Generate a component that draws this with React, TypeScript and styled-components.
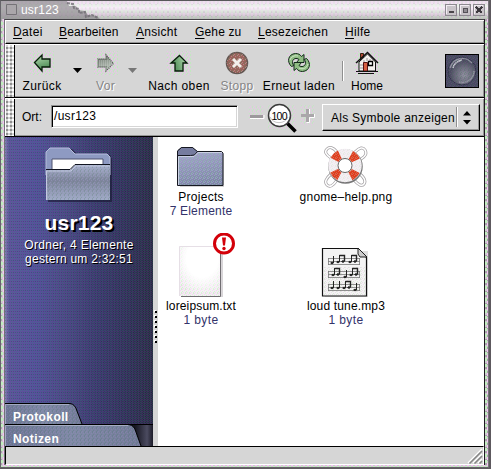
import React from "react";
import styled, { createGlobalStyle } from "styled-components";

const GlobalStyle = createGlobalStyle`
  html, body { margin: 0; padding: 0; background: #fff; }
  body { font-family: "Liberation Sans", Arial, sans-serif; font-size: 12px; line-height: 14px; color: #000; overflow: hidden; }
  svg { display: block; flex: none; }
`;

const Screen = styled.div`
  width: 492px;
  height: 469px;
  overflow: hidden;
`;
const Desktop = styled.div`
  width: 491px;
  height: 469px;
  background: #5d595e;
`;
const Frame = styled.div`
  box-sizing: border-box;
  width: 489px;
  height: 468px;
  border-left: 1px solid #66646a;
  border-top: 1px solid #58575a;
  border-right: 1px solid #77757a;
  border-bottom: 1px solid #646267;
  background:
    conic-gradient(#f4c4f3 25%, transparent 0) 0 0 / 4px 6px,
    conic-gradient(#c0edbd 25%, transparent 0) 2px 3px / 4px 6px,
    conic-gradient(#aaa5ab 25%, transparent 0) 1px 2px / 6px 4px,
    #cfcbd0;
  display: flex;
  flex-direction: column;
`;
const TitleBar = styled.header`
  height: 18px;
  flex: none;
  display: flex;
  align-items: center;
  padding-right: 3px;
  background: linear-gradient(#ede6eeaa, #fbf6fbcc 35%, #dcd7dcb0 70%, #b5b1b5b0);
`;
const TitleTab = styled.div`
  width: 94px;
  height: 18px;
  position: relative;
`;
const Title = styled.div`
  position: absolute;
  left: 20px;
  top: 2px;
  color: #fff;
  font-size: 12px;
  letter-spacing: 0.2px;
`;
const WindowButtons = styled.div`
  margin-left: auto;
  display: flex;
  gap: 2px;
`;
const Client = styled.div`
  margin-left: 3px;
  width: 481px;
  height: 446px;
  border-left: 1px solid #737177;
  border-top: 1px solid #454347;
  border-right: 1px solid #1c1a1e;
  box-sizing: border-box;
  background: #d6d6d6;
  display: flex;
  flex-direction: column;
`;
const barEdge = `
  box-sizing: border-box;
  border-top: 1px solid #fff;
  border-bottom: 1px solid #000;
  box-shadow: inset 0 -1px #969696, inset -1px 0 #969696;
  flex: none;
  display: flex;
`;
const MenuBar = styled.nav`
  ${barEdge}
  height: 24px;
  border-left: 1px solid #fff;
  padding: 4px 0 0 7px;
`;
const MenuItem = styled.div<{ $w: number; $ls: number }>`
  width: ${(p) => p.$w}px;
  letter-spacing: ${(p) => p.$ls}px;
  white-space: nowrap;
  u { text-underline-offset: 2px; text-decoration-thickness: 1px; }
`;
const Bar = styled.div<{ $h: number }>`
  ${barEdge}
  height: ${(p) => p.$h}px;
`;
const Handle = styled.div`
  box-sizing: border-box;
  width: 10px;
  flex: none;
  border-right: 1px solid #000;
  border-left: 1px solid #fff;
  background:
    conic-gradient(#fff 25%, transparent 0 50%, #8f8f8f 0 75%, transparent 0) 0 0 / 4px 4px,
    conic-gradient(#b0b0b0 25%, transparent 0 50%, #fff 0 75%, transparent 0) 2px 2px / 4px 4px,
    #d6d6d6;
`;
const ToolButton = styled.div<{ $w: number; $ls: number; $off?: boolean }>`
  width: ${(p) => p.$w}px;
  flex: none;
  display: flex;
  flex-direction: column;
  align-items: center;
  gap: 4px;
  padding-top: 6px;
  letter-spacing: ${(p) => p.$ls}px;
  white-space: nowrap;
  color: ${(p) => (p.$off ? "#858585" : "#000")};
  text-shadow: ${(p) => (p.$off ? "1px 1px #fff" : "none")};
`;
const Drop = styled.div<{ $w: number }>`
  width: ${(p) => p.$w}px;
  flex: none;
  display: flex;
  justify-content: center;
  padding-top: 23px;
`;
const Separator = styled.div<{ $h: number }>`
  width: 0;
  height: ${(p) => p.$h}px;
  border-left: 1px solid #8f8f8f;
  border-right: 1px solid #fff;
  flex: none;
`;
const SepCell = styled.div`
  width: 3px;
  padding-top: 16px;
`;
const Throbber = styled.div`
  margin: 9px 5px 0 auto;
`;
const Location = styled.div`
  display: flex;
  align-items: flex-start;
  flex: 1;
  padding: 5px 5px 0 7px;
`;
const OrtLabel = styled.label`
  width: 29px;
  padding-top: 6px;
`;
const Entry = styled.div`
  box-sizing: border-box;
  width: 187px;
  height: 23px;
  margin-top: 1px;
  background: #fff;
  border: 1px solid;
  border-color: #8f8f8f #fff #fff #8f8f8f;
  box-shadow: inset 1px 1px #000, inset -1px -1px #d6d6d6;
  padding: 3px 0 0 2px;
  letter-spacing: 0.3px;
`;
const ZoomBox = styled.div`
  margin: -1px 7px 0 11px;
  width: 66px;
`;
const Picker = styled.div`
  box-sizing: border-box;
  width: 158px;
  height: 27px;
  border: 1px solid;
  border-color: #fff #000 #000 #fff;
  box-shadow: inset -1px -1px #969696;
  display: flex;
  align-items: flex-start;
  padding: 2px 5px 0 8px;
`;
const PickerText = styled.div`
  width: 127px;
  padding-top: 4px;
  letter-spacing: 0.26px;
  white-space: nowrap;
`;
const Body = styled.div`
  display: flex;
  height: 309px;
  flex: none;
`;
const Sidebar = styled.aside`
  width: 148px;
  flex: none;
  display: flex;
  flex-direction: column;
  background:
    conic-gradient(#7a3aa838 25%, transparent 0 50%, #2f8a8030 0 75%, transparent 0) 0 0 / 3px 2px,
    conic-gradient(#0a102030 25%, transparent 0) 1px 0 / 2px 3px,
    linear-gradient(90deg, #8a83b4 0, #5c579a 4px, #54539a 30px, #4b4a84 60px, #3c3c6e 88px, #32335a 116px, #2a2b42 148px);
  color: #fff;
  text-shadow: 1px 1px #000;
`;
const SideInfo = styled.div`
  display: flex;
  flex-direction: column;
  align-items: center;
  padding: 10px 0 0 0;
  height: 266px;
  box-sizing: border-box;
`;
const SideTitle = styled.h1`
  margin: 8px 0 3px;
  font-size: 21px;
  line-height: 24px;
  letter-spacing: 0.2px;
  text-shadow: 2px 2px #000;
`;
const SideLine = styled.div<{ $ls: number }>`
  letter-spacing: ${(p) => p.$ls}px;
  white-space: nowrap;
`;
const SideTab = styled.div<{ $h: number }>`
  height: ${(p) => p.$h}px;
  display: grid;
  align-items: center;
  font-weight: bold;
  text-shadow: none;
  flex: none;
  > * { grid-area: 1 / 1; }
`;
const TabText = styled.span<{ $ls: number }>`
  padding: 7px 0 0 8px;
  letter-spacing: ${(p) => p.$ls}px;
`;
const Splitter = styled.div`
  width: 5px;
  flex: none;
  padding: 173px 0 0 1px;
  box-sizing: border-box;
`;
const Files = styled.main`
  flex: 1;
  background: #fff;
  display: grid;
  grid-template-columns: 145px 145px;
  grid-template-rows: 95px 120px;
`;
const FileItem = styled.div`
  display: flex;
  flex-direction: column;
  align-items: center;
  white-space: nowrap;
  width: 86px;
`;
const IconWell = styled.div<{ $h: number }>`
  height: ${(p) => p.$h}px;
  margin-bottom: 1px;
  display: flex;
  align-items: flex-end;
`;
const FileText = styled.div<{ $ls: number; $dim?: boolean }>`
  letter-spacing: ${(p) => p.$ls}px;
  color: ${(p) => (p.$dim ? "#33336a" : "#000")};
`;
const StatusBar = styled.footer`
  flex: 1;
  border: 1px solid;
  border-color: #000 #fff #fff #000;
  box-sizing: border-box;
  display: flex;
  justify-content: flex-end;
  align-items: flex-end;
`;

const WinBtn = ({ kind }: { kind: string }) => (
  <svg width="12" height="12" shapeRendering="crispEdges">
    <rect x="0.5" y="0.5" width="11" height="11" fill="#c9c4c9" stroke="#8d8990" />
    <path d="M1.5 10V1.5H10" stroke="#f3edf3" fill="none" />
    {kind === "min" && <path d="M4 8h5" stroke="#4a474b" strokeWidth="2" />}
    {kind === "max" && <path d="M4 4h4v4h-4z" fill="#918d93" stroke="#555158" />}
    {kind === "close" && <path d="M3 3l6 6M9 3l-6 6" stroke="#3c383e" strokeWidth="2" />}
  </svg>
);

const Dither = ({ id, a, b }: { id: string; a: string; b: string }) => (
  <pattern id={id} width="4" height="4" patternUnits="userSpaceOnUse">
    <path d="M0 0h1v1h-1zM2 1h1v1h-1zM1 3h1v1h-1z" fill={a} />
    <path d="M3 0h1v1h-1zM0 2h1v1h-1zM3 3h1v1h-1z" fill={b} />
  </pattern>
);

const Arrow = ({ rot, off }: { rot: number; off?: boolean }) => (
  <svg width="24" height="24">
    <defs>
      <Dither id={"ar" + rot} a="#eebfec" b="#bcebb9" />
      <linearGradient id={"ag" + rot} x2="0.3" y2="1">
        <stop stopColor={off ? "#c8d3c8" : "#b9dfb5"} />
        <stop offset="1" stopColor={off ? "#7b857b" : "#4a8a52"} />
      </linearGradient>
    </defs>
    <rect width="24" height="24" fill={`url(#ar${rot})`} opacity=".8" />
    <g transform={`rotate(${rot} 12 12)`}>
      <path d="M4.5 11.5 12 4v4h8v8h-8v4z" fill={`url(#ag${rot})`} stroke={off ? "#555" : "#071b09"} strokeWidth="1.3" strokeDasharray={off ? "1 1" : undefined} />
    </g>
    {off && <path d="M5 10h15M5 12h15M5 14h15" stroke="#d6d6d6" strokeDasharray="1 1" opacity=".6" />}
  </svg>
);

const StopIcon = () => (
  <svg width="24" height="24">
    <defs><Dither id="st" a="#b8a9a0" b="#6f7a5c" /></defs>
    <circle cx="12" cy="12" r="10.6" fill="#a0605c" stroke="#625652" strokeWidth="1.3" />
    <circle cx="12" cy="12" r="10.6" fill="url(#st)" opacity=".6" />
    <path d="M8 8l8 8M16 8l-8 8" stroke="#f2edea" strokeWidth="3" />
  </svg>
);

const ReloadIcon = () => (
  <svg width="24" height="24">
    <defs><Dither id="re" a="#eebfec" b="#bcebb9" /></defs>
    <rect width="24" height="24" fill="url(#re)" opacity=".7" />
    <g fill="#8fbd83" stroke="#13291a" strokeLinejoin="round">
      <path d="M4.500 15.500C-.5 11 1 3 8.500 2.500c3 0 4.500 1 6 3L17 3.500v8H9.500l2.500-3C9.500 6.500 6 7.500 5.500 10.500c-.3 2 .5 3 1.500 4z" />
      <path d="M19.500 7.500c5 4.500 3.500 12.500-4 13-3 0-4.500-1-6-3L7 19.500v-8h7.500l-2.500 3c2.500 2 6 1 6.500-2 .3-2-.5-3-1.500-4z" />
    </g>
    <path d="M3 9c1-3 4-5 8-4M21 13c-1 4-5 6-9 4" stroke="#d0e7c9" fill="none" />
  </svg>
);

const HomeIcon = () => (
  <svg width="24" height="24">
    <defs><Dither id="ho" a="#eebfec" b="#bcebb9" /></defs>
    <rect width="24" height="24" fill="url(#ho)" opacity=".8" />
    <path d="M5.5 9V2.5h3V7" fill="#b34b37" stroke="#321" />
    <path d="M4 11 12.5 3l8 8v9H4z" fill="#f4f1ee" stroke="#111" />
    <path d="M1 12 12.5 1.5 23 12" fill="none" stroke="#111" strokeWidth="1.5" />
    <path d="M5 14h4M12 7v3M9 9v3M15 8v2M5 17h3" stroke="#999" />
    <path d="M8.5 20v-8.500h4V20z" fill="#d55f42" stroke="#511" />
    <path d="M13.500 10.500h4v4h-4z" fill="#fff" stroke="#000" strokeWidth="1.3" />
    <path d="M1 20.500h22M3 22.500h16" stroke="#111" />
  </svg>
);

const ThrobberIcon = () => (
  <svg width="34" height="34">
    <defs>
      <radialGradient id="orb" cx=".58" cy=".65">
        <stop stopColor="#8f929f" /><stop offset=".65" stopColor="#666878" /><stop offset="1" stopColor="#4b4c60" />
      </radialGradient>
      <Dither id="td" a="#755b86" b="#4d6a61" />
    </defs>
    <rect x=".5" y=".5" width="33" height="33" fill="#484962" stroke="#000" />
    <circle cx="17" cy="17" r="14" fill="url(#orb)" />
    <path d="M5 14C8 4 20 1 27 9M29 17c0 8-7 13-15 11" stroke="#8f929f" strokeWidth="1.5" fill="none" />
    <path d="M8 14c1-5 5-7 9-8" stroke="#c4c6ce" strokeWidth="1.5" fill="none" />
    <circle cx="17" cy="17" r="14" fill="none" stroke="#32334c" />
    <rect x="1" y="1" width="32" height="32" fill="url(#td)" opacity=".35" />
  </svg>
);

const ZoomIcon = () => (
  <svg width="66" height="30">
    <defs><Dither id="zo" a="#eebfec" b="#bcebb9" /></defs>
    <path d="M0 3h14v14H0zM19 2h28v25H19zM52 2h13v20H52z" fill="url(#zo)" opacity=".6" />
    <path d="M1 12h13v3H1z" fill="#9d999d" /><path d="M1 15.500h14V12" fill="none" stroke="#fff" />
    <path d="M57 6h3v5h5v3h-5v5h-3v-5h-5v-3h5z" fill="#aaa7aa" />
    <path d="M60.500 6v5M65.500 11v3.500h-5v5h-3" fill="none" stroke="#fff" />
    <path d="m38 20 8.500 8.500" stroke="#000" strokeWidth="3.500" />
    <circle cx="30.500" cy="12.500" r="11" fill="#fff" stroke="#3b3b3b" strokeWidth="1.500" />
    <path d="M21 14a10 10 0 0 0 18 0" fill="none" stroke="#c5c5c5" />
    <text x="30.500" y="16.500" fontSize="10.500" textAnchor="middle" textLength="16">100</text>
  </svg>
);

const BigFolder = () => (
  <svg width="68" height="56">
    <defs>
      <linearGradient id="bf" x2="0" y2="1"><stop stopColor="#a8b1cc" /><stop offset=".45" stopColor="#7e849c" /><stop offset="1" stopColor="#a0abc6" /></linearGradient>
      <Dither id="bd" a="#a3a6d1" b="#668481" />
    </defs>
    <path d="M3 55V6l4-4h20l6 6h32l2 4v43z" fill="#17162e" opacity=".6" />
    <path d="M1 24V5l4-4h19l6 6h32l3 3v18H1z" fill="#8e9ac2" stroke="#b4bddb" />
    <path d="M7 26V12h51v10" fill="#fff" stroke="#4f536e" />
    <path d="M1 53V23h24l5-5h35v35z" fill="url(#bf)" />
    <path d="M1 53V23h24l5-5h35v35z" fill="url(#bd)" opacity=".35" />
    <path d="M1 22.500h24l5-5h35" fill="none" stroke="#111420" />
    <path d="M1.500 53V24H26l5-5h34" fill="none" stroke="#c1c8e0" />
  </svg>
);

const FolderIcon = () => (
  <svg width="50" height="43">
    <defs>
      <linearGradient id="pf" x2=".2" y2="1"><stop stopColor="#a8abcd" /><stop offset="1" stopColor="#7f89a6" /></linearGradient>
      <Dither id="pd" a="#a9a0db" b="#91bab5" />
    </defs>
    <path d="M4 8h44v33H4z" fill="#aaa" opacity=".5" />
    <path d="M1.500 39.500V5l4-3.500h11l4 4h25l1.500 1.500v32.500z" fill="url(#pf)" stroke="#161821" />
    <path d="M2 39V6h44v33z" fill="url(#pd)" opacity=".6" />
    <path d="M1.500 9.500V5l4-3.500h11l5 4-3 3.500-4 .5z" fill="#767c9f" stroke="#161821" />
    <path d="M2.500 39V10.500H18l4-4h24" stroke="#cbd0e4" fill="none" />
  </svg>
);

const TextIcon = () => (
  <svg width="70" height="65">
    <defs>
      <Dither id="tx" a="#f6d3f3" b="#d2f0cf" />
      <radialGradient id="tf" cx=".55" cy=".25" r=".75"><stop offset=".5" stopColor="#fff" /><stop offset="1" stopColor="#fff" stopOpacity="0" /></radialGradient>
    </defs>
    <path d="M15 16h42v48H15z" fill="#d8d5d8" />
    <path d="M13 13h42v50H13z" fill="#f1eff1" />
    <path d="M13 13h42v50H13z" fill="url(#tx)" />
    <path d="M13 13h42v50H13z" fill="url(#tf)" />
    <path d="M13.500 63V13.500h41" fill="none" stroke="#e6dfe6" />
    <path d="M54.500 16v47.500H15" fill="none" stroke="#716e72" />
    <circle cx="58" cy="10.500" r="9.500" fill="#fff" stroke="#d30009" strokeWidth="3" />
    <path d="M56 4.500h4l-1 8h-2z" fill="#d30009" /><circle cx="58" cy="15.500" r="1.700" fill="#d30009" />
  </svg>
);

const HelpIcon = () => (
  <svg width="44" height="43">
    <defs><Dither id="hd" a="#e7c5e4" b="#bdd7bb" /></defs>
    <g fill="none" stroke="#a5a2a5" strokeWidth="3">
      <path d="M13 6Q7-1 3 3t4 9M31 6q7-7 10-2t-4 9M7 28q-8 7-4 11t10-5M36 28q7 6 4 10t-10-4" />
    </g>
    <g fill="none" stroke="#fff" strokeWidth="1.500">
      <path d="M13 6Q7-1 3 3t4 9M31 6q7-7 10-2t-4 9M7 28q-8 7-4 11t10-5M36 28q7 6 4 10t-10-4" />
    </g>
    <circle cx="21.500" cy="20.500" r="12" fill="none" stroke="#777" strokeWidth="10.500" />
    <circle cx="21" cy="19.500" r="12" fill="#fff" stroke="#f3f0f3" strokeWidth="9.500" />
    <circle cx="21" cy="19.500" r="12" fill="none" stroke="#df3e1d" strokeWidth="9" strokeDasharray="7.500 11.350" strokeDashoffset="-5.670" />
    <circle cx="21" cy="19.500" r="12" fill="none" stroke="url(#hd)" strokeWidth="9" opacity=".25" />
    <circle cx="21" cy="19.500" r="7" fill="none" stroke="#666" />
  </svg>
);

const Note = ({ x, y, pair }: { x: number; y: number; pair?: boolean }) => (
  <g transform={`translate(${x} ${y})`} stroke="#222" fill="#222">
    <ellipse cx="1" cy="7" rx="1.300" ry=".7" />
    <path d="M2.500 7V0" fill="none" />
    {pair && <><path d="M2.500 .5h5V6" fill="none" strokeWidth="1.400" /><ellipse cx="6" cy="6.500" rx="1.300" ry=".7" /></>}
  </g>
);

const MusicIcon = () => (
  <svg width="50" height="51">
    <defs><Dither id="mu" a="#e8d8e6" b="#d5e2d2" /></defs>
    <path d="M4 4h43v46H4z" fill="#ccc" opacity=".6" />
    <path d="M1.500 1.500H37l8.500 9v38.500h-44z" fill="#f4f4f4" stroke="#111" strokeWidth="1.200" />
    <path d="M2 20h43v28H2z" fill="url(#mu)" opacity=".7" />
    <path d="M37 1v6l2 3h7z" fill="#ccc" stroke="#222" />
    {[11, 24, 37].map((y) => (
      <path key={y} d={`M7 ${y + 0.5}h32M7 ${y + 3.5}h32M7 ${y + 6.5}h32M7.500 ${y}v7M38.500 ${y}v7`} stroke="#777" strokeWidth=".8" />
    ))}
    <Note x={10} y={9} /><Note x={16} y={8} pair /><Note x={28} y={8} pair />
    <Note x={11} y={21} pair /><Note x={23} y={23} /><Note x={29} y={21} pair />
    <Note x={10} y={34} /><Note x={16} y={34} /><Note x={22} y={34} pair /><Note x={33} y={36} />
  </svg>
);

const TabShape = ({ end, h, dark }: { end: number; h: number; dark?: boolean }) => (
  <svg width="148" height={h}>
    <defs>
      <linearGradient id={"tb" + end}><stop stopColor="#6d7594" /><stop offset=".5" stopColor="#808aa6" /><stop offset="1" stopColor="#737b98" /></linearGradient>
      <linearGradient id={"dk" + end}><stop offset=".88" stopColor="#171722" /><stop offset=".96" stopColor="#4b4b60" /><stop offset="1" stopColor="#1d1c29" /></linearGradient>
      <Dither id={"t" + end} a="#9588c0" b="#537a78" />
    </defs>
    {dark && <rect width="148" height={h} fill={`url(#dk${end})`} />}
    <path d={`M0 ${h}V1H${end - 12}Q${end - 7} 1 ${end - 5} 8L${end} ${h}z`} fill={`url(#tb${end})`} />
    <path d={`M0 ${h}V1H${end - 12}Q${end - 7} 1 ${end - 5} 8L${end} ${h}z`} fill={`url(#t${end})`} opacity=".35" />
    <path d={`M.5 ${h}V1.500H${end - 13}`} fill="none" stroke="#b7bed2" opacity=".7" />
    <path d={`M0 .5H${end - 12}Q${end - 7} 1 ${end - 5} 8L${end} ${h}`} fill="none" stroke="#000" />
    {dark && <path d="M0 .5h148" stroke="#000" />}
  </svg>
);

const Tri = ({ fill }: { fill: string }) => (
  <svg width="11" height="6"><path d="M1 0h9L5.500 5z" fill={fill} /></svg>
);

export default function App() {
  return (
    <Screen>
      <GlobalStyle />
      <Desktop>
        <Frame>
          <TitleBar>
            <TitleTab>
              <svg width="104" height="18">
                <path d="M0 0h66l2 5h7l2 4 7 1 3 4 9 1 3 3H0z" fill="#8e8b8f" opacity=".68" />
                <path d="M66 2l6 1 1 4 5 1v4l6-1 1 5 6-2 6 3" fill="none" stroke="#716d73" strokeWidth="2" strokeDasharray="3 1" opacity=".8" />
                <path d="M5.500 3.500h10v10h-10z" fill="#aaa6aa" stroke="#757277" />
              </svg>
              <Title>usr123</Title>
            </TitleTab>
            <WindowButtons>
              <WinBtn kind="min" /><WinBtn kind="max" /><WinBtn kind="close" />
            </WindowButtons>
          </TitleBar>
          <Client>
            <MenuBar>
              <MenuItem $w={46} $ls={0.35}><u>D</u>atei</MenuItem>
              <MenuItem $w={77} $ls={0.15}><u>B</u>earbeiten</MenuItem>
              <MenuItem $w={59} $ls={0.3}><u>A</u>nsicht</MenuItem>
              <MenuItem $w={63} $ls={0.15}><u>G</u>ehe zu</MenuItem>
              <MenuItem $w={87} $ls={0.25}><u>L</u>esezeichen</MenuItem>
              <MenuItem $w={40} $ls={0.3}><u>H</u>ilfe</MenuItem>
            </MenuBar>
            <Bar $h={54}>
              <Handle />
              <ToolButton $w={54} $ls={0.4}><Arrow rot={0} />Zurück</ToolButton>
              <Drop $w={17}><Tri fill="#000" /></Drop>
              <ToolButton $w={39} $ls={0.4} $off><Arrow rot={180} off />Vor</ToolButton>
              <Drop $w={15}><Tri fill="#777" /></Drop>
              <ToolButton $w={78} $ls={0.4}><Arrow rot={90} />Nach oben</ToolButton>
              <ToolButton $w={38} $ls={0.3} $off><StopIcon />Stopp</ToolButton>
              <ToolButton $w={86} $ls={0.35}><ReloadIcon />Erneut laden</ToolButton>
              <SepCell><Separator $h={20} /></SepCell>
              <ToolButton $w={44} $ls={0}><HomeIcon />Home</ToolButton>
              <Throbber><ThrobberIcon /></Throbber>
            </Bar>
            <Bar $h={39}>
              <Handle />
              <Location>
                <OrtLabel>Ort:</OrtLabel>
                <Entry>/usr123</Entry>
                <ZoomBox><ZoomIcon /></ZoomBox>
                <Picker>
                  <PickerText>Als Symbole anzeigen</PickerText>
                  <Separator $h={20} />
                  <svg width="16" height="21"><path d="M5 8.500 9 4l4 4.500zM5 13h8l-4 4.500z" /></svg>
                </Picker>
              </Location>
            </Bar>
            <Body>
              <Sidebar>
                <SideInfo>
                  <BigFolder />
                  <SideTitle>usr123</SideTitle>
                  <SideLine $ls={0.3}>Ordner, 4 Elemente</SideLine>
                  <SideLine $ls={0.25}>gestern um 2:32:51</SideLine>
                </SideInfo>
                <SideTab $h={21}><TabShape end={77} h={21} /><TabText $ls={0.4}>Protokoll</TabText></SideTab>
                <SideTab $h={22}><TabShape end={136} h={22} dark /><TabText $ls={0.4}>Notizen</TabText></SideTab>
              </Sidebar>
              <Splitter>
                <svg width="4" height="36" shapeRendering="crispEdges">
                  {[0, 5, 10, 15, 20, 25, 30].map((y) => (
                    <g key={y}><path d={`M0 ${y}h2v2h-2z`} fill="#fff" /><path d={`M1 ${y + 1}h2v2h-2z`} fill="#000" /></g>
                  ))}
                </svg>
              </Splitter>
              <Files>
                <FileItem>
                  <IconWell $h={52}><FolderIcon /></IconWell>
                  <FileText $ls={0.3}>Projects</FileText>
                  <FileText $ls={0.2} $dim>7 Elemente</FileText>
                </FileItem>
                <FileItem>
                  <IconWell $h={52}><HelpIcon /></IconWell>
                  <FileText $ls={0.25}>gnome–help.png</FileText>
                </FileItem>
                <FileItem>
                  <IconWell $h={66}><TextIcon /></IconWell>
                  <FileText $ls={0.15}>loreipsum.txt</FileText>
                  <FileText $ls={0.4} $dim>1 byte</FileText>
                </FileItem>
                <FileItem>
                  <IconWell $h={66}><MusicIcon /></IconWell>
                  <FileText $ls={0.15}>loud tune.mp3</FileText>
                  <FileText $ls={0.4} $dim>1 byte</FileText>
                </FileItem>
              </Files>
            </Body>
            <StatusBar>
              <svg width="16" height="16">
                <path d="M1 15 15 1M6 15l9-9M11 15l4-4" stroke="#fff" strokeWidth="1.500" />
                <path d="M2.500 15.500 15 3M7.500 15.500 15 8M12.500 15.500 15 13" stroke="#858585" strokeWidth="1.500" />
              </svg>
            </StatusBar>
          </Client>
        </Frame>
      </Desktop>
    </Screen>
  );
}
